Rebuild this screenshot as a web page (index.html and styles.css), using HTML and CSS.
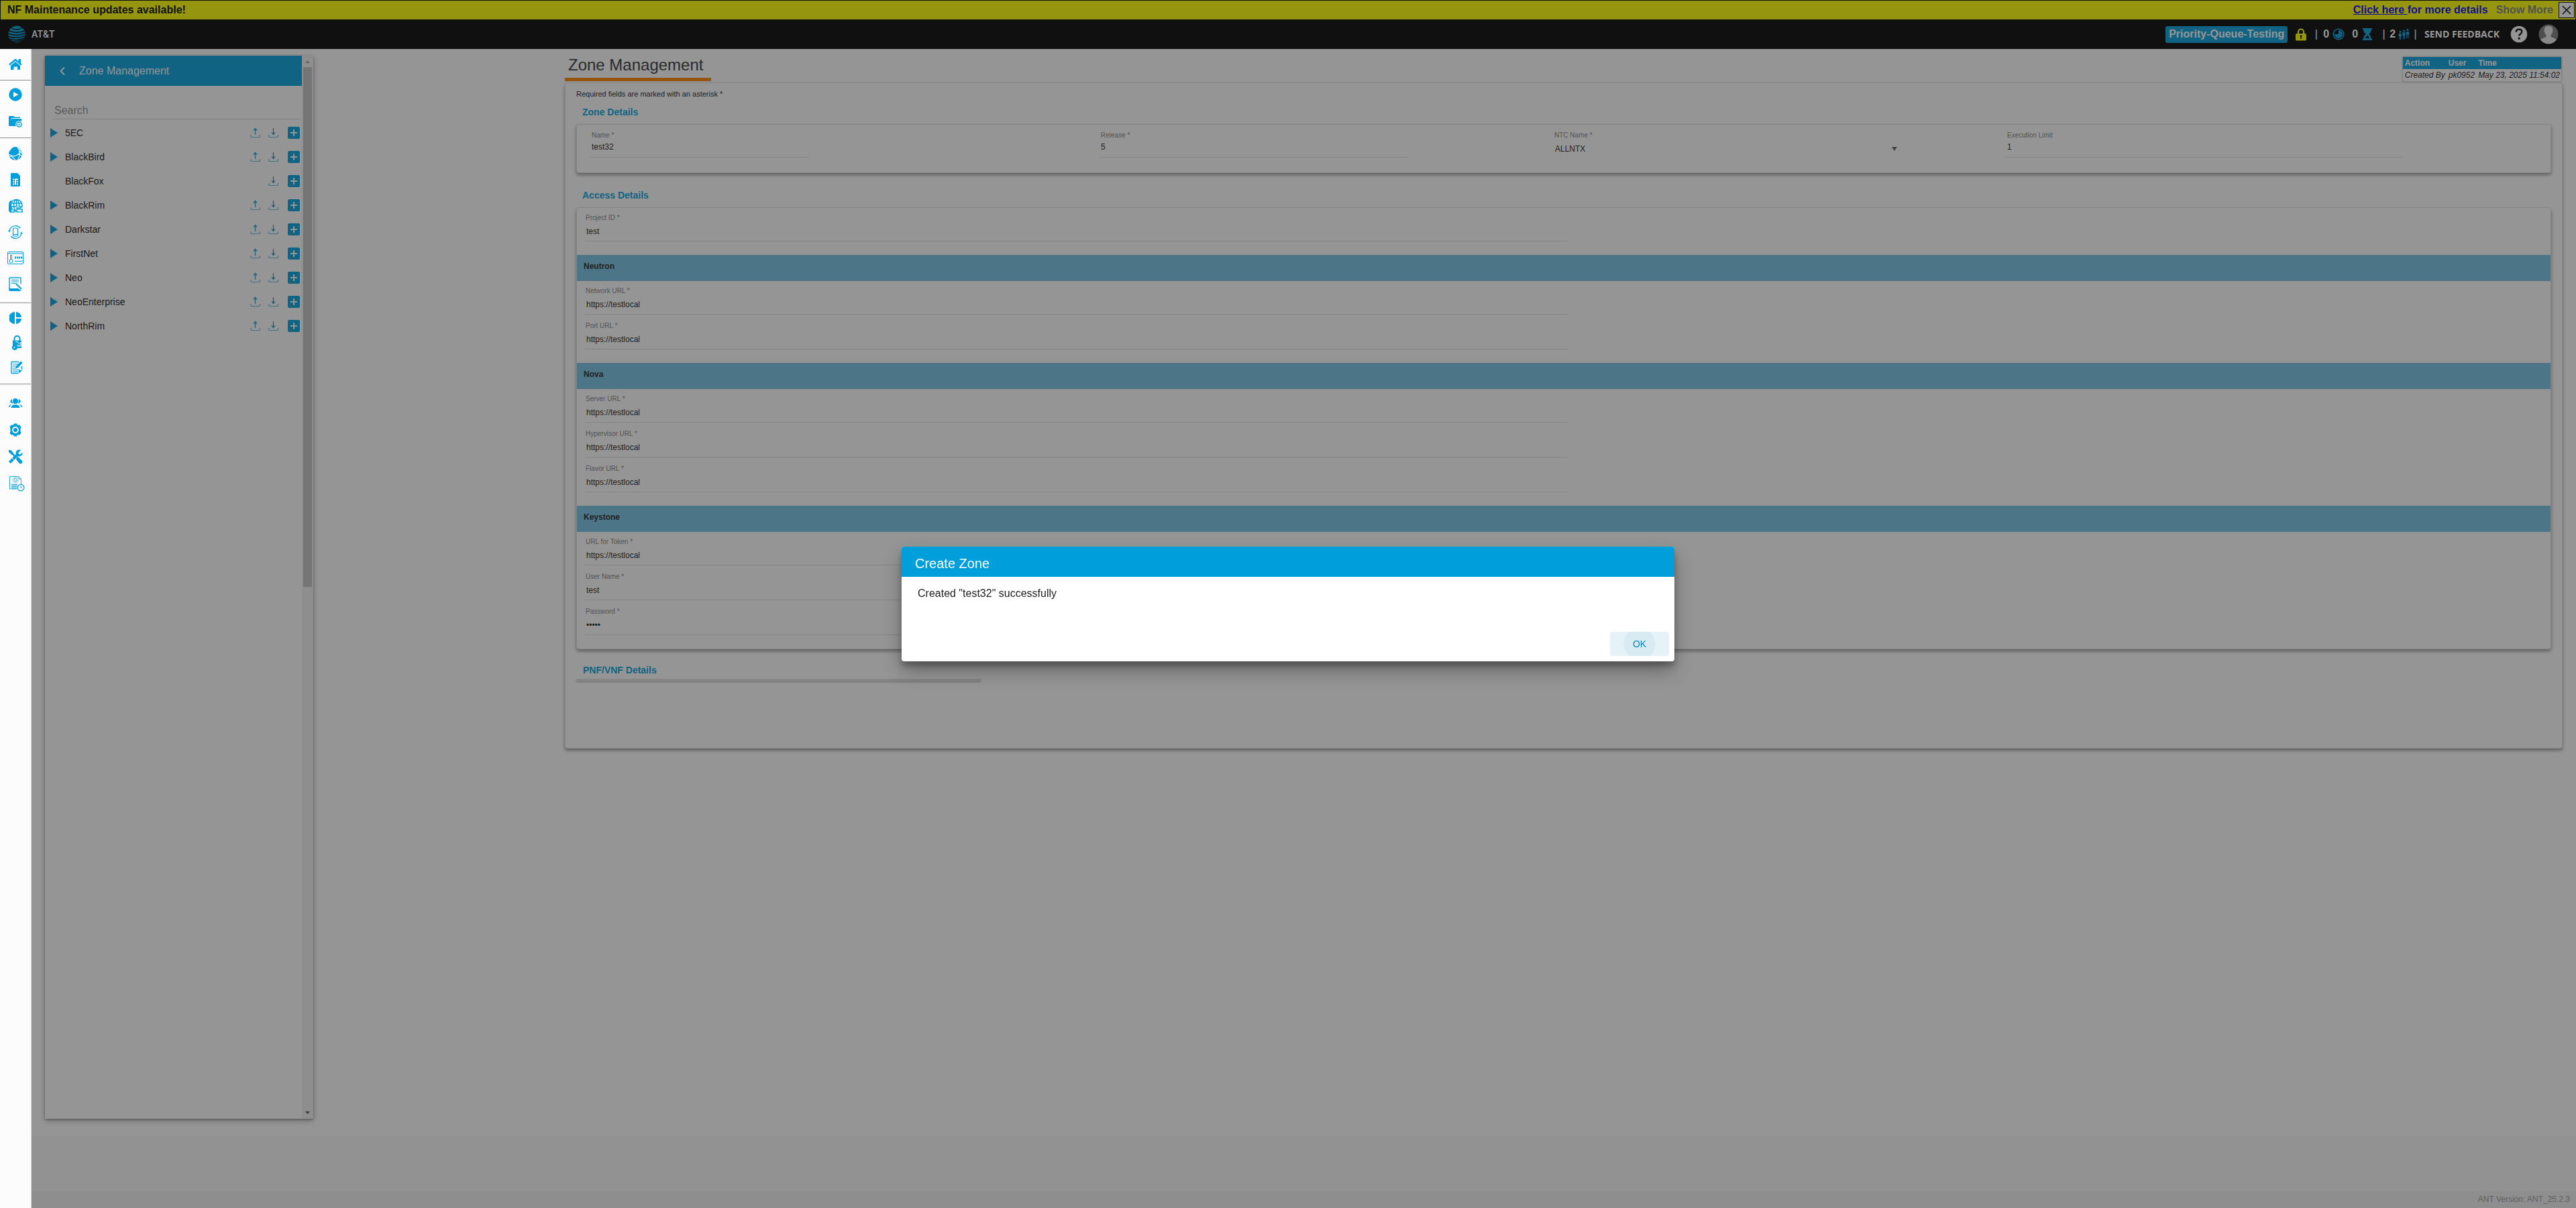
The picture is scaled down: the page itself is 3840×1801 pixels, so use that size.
FILE: index.html
```
<!DOCTYPE html>
<html lang="en">
<head>
<meta charset="utf-8">
<title>Zone Management</title>
<link rel="stylesheet" href="styles.css">
</head>
<body>
<svg class="defs" aria-hidden="true">
  <symbol id="i-up" viewBox="0 0 16 16"><g fill="none" stroke="currentColor"><path d="M1 11v2.500q0 1 1 1h11.500q1 0 1-1V11" opacity=".7" stroke-width="1.200"/><path d="M7.500 11V2M5 4.500 7.500 1.500 10 4.500" stroke-width="1.300"/></g></symbol>
  <symbol id="i-down" viewBox="0 0 16 16"><g fill="none" stroke="currentColor"><path d="M1 11v2.500q0 1 1 1h11.500q1 0 1-1V11" opacity=".7" stroke-width="1.200"/><path d="M7.500 1v9M5 7.500l2.500 3 2.500-3" stroke-width="1.300"/></g></symbol>
  <symbol id="i-plus" viewBox="0 0 18 18"><rect width="18" height="18" rx="2" fill="#009fdb"/><path d="M9 4v10M4 9h10" stroke="#fff" stroke-width="2"/></symbol>
  <symbol id="i-tri" viewBox="0 0 11 14"><path d="M0 0 11 7 0 14z" fill="#009fdb"/></symbol>
</svg>

<div class="banner">
  <strong>NF Maintenance updates available!</strong>
  <span class="banner-right">
    <span class="banner-link"><a href="#">Click here </a>for more details</span>
    <button class="show-more" type="button">Show More</button>
    <button class="banner-close" type="button" aria-label="Close"><svg width="22" height="22" viewBox="0 0 22 22"><path d="M5 5 17 17M17 5 5 17" stroke="#000" stroke-width="1.600"/></svg></button>
  </span>
</div>

<header class="topbar">
  <a class="brand" href="#">
    <svg width="26" height="26" viewBox="0 0 26 26"><defs><clipPath id="ball"><circle cx="13" cy="13" r="12.500"/></clipPath></defs>
      <g clip-path="url(#ball)"><rect width="26" height="26" fill="#009fdb"/><g fill="none" stroke="#000" stroke-width="1.500"><path d="M4 3q9 6 18 0" stroke-width="1.300"/><path d="M0 7.500q13 6 26 0"/><path d="M0 12q13 5 26-.500"/><path d="M0 16q13 5 26-1"/><path d="M2 20q12 4 23-1.500"/><path d="M5 23.300q9 2 17-1.500"/></g></g></svg>
    AT&amp;T
  </a>
  <div class="status">
    <span class="queue">Priority-Queue-Testing</span>
    <svg class="lock" width="16" height="19" viewBox="0 0 16 19"><path d="M4 9V5.500a4 4 0 0 1 8 0V9" fill="none" stroke="#ff0" stroke-width="2.200"/><rect y="8" width="16" height="10.500" rx="1.500" fill="#ff0"/><circle cx="8" cy="11.800" r="1.600" fill="#111"/><path d="M7.200 12h1.600v4H7.200z" fill="#111"/></svg>
    <span class="bar">|</span>
    <span class="count">0 <svg width="18" height="18" viewBox="0 0 18 18"><circle cx="9" cy="9" r="7.800" fill="none" stroke="#009fdb" stroke-width="1.600"/><path d="M9 3a6 6 0 1 1-6 6h6z" fill="#009fdb"/></svg></span>
    <span class="count hour">0 <svg width="14" height="18" viewBox="0 0 14 18"><path d="M0 0h14v2h-1q-.500 5-4 7 3.500 2 4 7h1v2H0v-2h1q.500-5 4-7-3.500-2-4-7H0z" fill="#009fdb"/><path d="M7 10.500 10.500 15h-7z" fill="#000"/></svg></span>
    <span class="bar">|</span>
    <span class="count people">2<svg width="17" height="17" viewBox="0 0 17 17" fill="#009fdb"><circle cx="3" cy="4.500" r="1.600"/><circle cx="8.500" cy="2.800" r="1.600"/><circle cx="14" cy="1.700" r="1.600"/><path d="M.500 7h4.500v4h-1v5H3v-4h-.500v4h-1v-5h-1zM6.200 5.300h4.500v4h-.700v6H9v-5h-1v5H6.900v-6h-.700zM11.800 4.200h4.500v4h-.700v6h-1v-5h-1v5h-1.100v-6h-.700z"/></svg></span>
    <span class="bar">|</span>
    <a class="feedback" href="#">SEND FEEDBACK</a>
    <button class="icon-btn help" type="button" aria-label="Help"><svg width="26" height="26" viewBox="0 0 26 26"><circle cx="13" cy="13" r="12.300" fill="#fff"/><path d="M8.700 9.800q0-4 4.300-4t4.300 3.500c0 3-4 3.200-4 6.200" fill="none" stroke="#111" stroke-width="2.600"/><circle cx="13.200" cy="19.300" r="1.700" fill="#111"/></svg></button>
    <button class="icon-btn" type="button" aria-label="Account"><svg width="30" height="30" viewBox="0 0 30 30"><circle cx="15" cy="15" r="14.500" fill="#797979"/><path d="M3 23q4-2.500 8.500-4V16Q8.500 13 8.500 8.500 9 2.500 15 2.500t6.500 6q0 4.500-3 7.500v3q4.500 1.500 8.500 4a14.500 14.500 0 0 1-24 0z" fill="#e8e8e8"/></svg></button>
  </div>
</header>

<div class="shell">
  <nav class="rail" aria-label="Main">
    <div class="rail-group g1">
      <a href="#" aria-label="Home"><svg width="20" height="20" viewBox="0 0 20 20"><path d="M1 10.500 10 3l9 7.500" fill="none" stroke="#009fdb" stroke-width="2.400"/><path d="M14.500 2H18v6l-3.500-3z" fill="#009fdb"/><path d="M3 11.800 10 6l7 5.800V18h-4v-4.500h-5.500V18H3z" fill="#009fdb"/></svg></a>
    </div>
    <div class="rail-group g2">
      <a href="#" aria-label="Run"><svg width="20" height="20" viewBox="0 0 20 20"><circle cx="10" cy="10" r="9.700" fill="#009fdb"/><path d="M7 6v8l7.500-4z" fill="#fff"/></svg></a>
      <a href="#" aria-label="Runs"><svg width="22" height="20" viewBox="0 0 22 20"><path d="M1 15V3q0-1 1-1h6l2 1.500h8V5H5L2.500 16H1z" fill="#009fdb"/><path d="M5 6H20.500l-2.500 11H1z" fill="#009fdb"/><circle cx="16.500" cy="14.500" r="5.200" fill="#fcfcfc"/><circle cx="16.500" cy="14.500" r="3.500" fill="none" stroke="#009fdb" stroke-width="1.500"/><path d="M15.500 12.800v3.400l2.700-1.700z" fill="#009fdb"/></svg></a>
    </div>
    <div class="rail-group g3">
      <a href="#" aria-label="Network"><svg width="22" height="22" viewBox="0 0 22 22"><circle cx="11" cy="11" r="10" fill="#009fdb"/><g fill="none" stroke="#fcfcfc" stroke-width="1.100"><path d="M1 12q6 4 11 2 6-3 8-8M14 1q7 10 0 20M2 15q6 0 9 6M14 12q4 0 8 3M16 7q3 1 6 5M1 8l5-6M15 3l6 4"/></g><circle cx="9.500" cy="7" r="5" fill="#009fdb"/></svg></a>
      <a href="#" aria-label="SIM"><svg width="16" height="20" viewBox="0 0 16 20"><path d="M1 1q0-1 1-1h9l4 4v15q0 1-1 1H2q-1 0-1-1z" fill="#009fdb"/><path d="M4 8.500h2v2H4zM7 8.500h5v2H9v7H7zM4 12h2v2H4zM10 12h2v2h-2zM4 15.500h2v2H4zM10 15.500h2v2h-2z" fill="#fff"/></svg></a>
      <a href="#" aria-label="Sites"><svg width="22" height="22" viewBox="0 0 22 22"><path d="M6 2a8 8 0 0 0-5 8v8q1 3 4 3V2z" fill="#009fdb"/><circle cx="12.500" cy="10" r="8.500" fill="none" stroke="#009fdb" stroke-width="1.500"/><ellipse cx="12.500" cy="10" rx="4" ry="8.500" fill="none" stroke="#009fdb" stroke-width="1.400"/><path d="M4 7h17M4 12h17M12.500 2v17M3 20h8" stroke="#009fdb" stroke-width="1.600"/><path d="M12 12h9v9h-9z" fill="#fcfcfc"/><path d="M12 14h4v2h-3v4h4M21 13h-3v3h3v4h-3" fill="none" stroke="#009fdb" stroke-width="1.500"/></svg></a>
      <a href="#" aria-label="Device sync"><svg width="22" height="22" viewBox="0 0 22 22"><g fill="none" stroke="#009fdb" stroke-width="1.200"><path d="M2 10A9 9 0 0 1 18 5M20 12A9 9 0 0 1 4 17"/><rect x="7.500" y="5" width="7" height="12" rx="1.500"/><path d="M8 14.500h6"/></g><path d="M0 8.500h4l-2 3zM22 13.500h-4l2-3z" fill="#009fdb"/></svg></a>
      <a href="#" aria-label="Credentials"><svg width="24" height="20" viewBox="0 0 24 20"><g fill="none" stroke="#009fdb"><rect x=".5" y=".5" width="23" height="18" rx="1"/><path d="M0 3h24M11 14.500h11"/><circle cx="5.500" cy="14" r="2.500"/><path d="M4.500 12V5.500h2V12"/></g><path d="M11 9h11" stroke="#009fdb" stroke-width="3" stroke-dasharray="2 1"/></svg></a>
      <a href="#" aria-label="Logs"><svg width="20" height="22" viewBox="0 0 20 22"><path d="M18 10V2q0-1-1-1H2Q1 1 1 2v17q0 1 1 1h15" fill="none" stroke="#009fdb" stroke-width="1.400"/><path d="M1 17.500h13l4 3H2q-1 0-1-1zM4 4.500h11M4 7h11M4 9.500h6" stroke="#009fdb" fill="#009fdb"/><path d="M10.500 9.500 19 18" stroke="#009fdb" stroke-width="2"/></svg></a>
    </div>
    <div class="rail-group g4">
      <a href="#" aria-label="Reports"><svg width="18" height="18" viewBox="0 0 18 18" fill="#009fdb"><path d="M8 0v18A9 9 0 0 1 8 0zM10 0a9 9 0 0 1 8 8h-8zM10 10h8a9 9 0 0 1-8 8z"/></svg></a>
      <a class="nudge" href="#" aria-label="Access keys"><svg width="16" height="22" viewBox="0 0 16 22"><path d="M4.500 9V5a4 4 0 0 1 8 0v4" fill="none" stroke="#009fdb" stroke-width="2"/><rect x="2" y="7.500" width="13" height="9" fill="#009fdb"/><path d="M6 10q3-2 4 1t4-1v5H8" fill="none" stroke="#fff"/><circle cx="5" cy="18" r="4" fill="#009fdb"/><path d="M8 18h7" stroke="#009fdb" stroke-width="2"/><circle cx="4.500" cy="18" r="1" fill="#fff"/></svg></a>
      <a class="nudge" href="#" aria-label="Notes"><svg width="18" height="20" viewBox="0 0 18 20"><path d="M12 1.500H2q-1 0-1 1v15q0 1 1 1h9.500M16.500 8v5" fill="none" stroke="#009fdb" stroke-width="1.400"/><path d="M3 5h8M3 8h5M3 11h4M3 13.500h10M3 16h8" stroke="#009fdb"/><path d="M7 11.500 8 8l7-7.500 2.500 2.500-7 7.500zM12 18.500V14h4.500v1z" fill="#009fdb"/></svg></a>
    </div>
    <div class="rail-group g5">
      <a href="#" aria-label="Users"><svg width="20" height="16" viewBox="0 0 20 16" fill="#009fdb"><circle cx="10" cy="5" r="4"/><path d="M5 2A3.200 3.200 0 0 0 4.500 8.200l2 .3Q4 5 5 2zM15 2a3.200 3.200 0 0 1 .5 6.200l-2 .3Q16 5 15 2zM3.500 15q.5-4.700 6.500-4.700t6.500 4.700zM0 14q0-3.500 4-4.300Q2 11.500 1.500 14zM20 14q0-3.500-4-4.300 2 1.800 2.500 4.300z"/></svg></a>
      <a href="#" aria-label="Settings"><svg width="20" height="20" viewBox="0 0 20 20"><path d="M8 .5h4l1.200 2.300 3-.3 2.300 3.500L17.500 8v4l1 2.500-2.300 3-3-.3L12 19.500H8l-1.200-2.300-3 .3-2.300-3 1-2.500V8l-1-2.500 2.300-3 3 .3z" fill="#009fdb"/><circle cx="10" cy="10" r="4" fill="none" stroke="#fff" stroke-width="1.800"/></svg></a>
      <a href="#" aria-label="Tools"><svg width="22" height="22" viewBox="0 0 22 22"><path d="M3 3 12 12" stroke="#009fdb" stroke-width="2.500"/><path d="M1 1h3l4 4-2.500 3L1 4zM13 12l2-1 6 6q1 2-.5 3.500T17 21l-5-6z" fill="#009fdb"/><path d="M2.500 19.500 16 6" stroke="#009fdb" stroke-width="4"/><circle cx="16.500" cy="5.500" r="5" fill="#009fdb"/><path d="M15 5.500 20 0l3 3-5.500 5z" fill="#fcfcfc"/><path d="M6 13l3 3" stroke="#fcfcfc"/></svg></a>
      <a class="nudge" href="#" aria-label="Scheduled jobs"><svg width="24" height="24" viewBox="0 0 24 24"><g fill="none" stroke="#009fdb" opacity=".85"><path d="M12 20H1.500V1.500H15L18.500 5v8M15 1.500V5h3.500"/><circle cx="10" cy="6.500" r="4" stroke-dasharray="2 1"/><circle cx="10" cy="6.500" r="2"/><path d="M4 13.500h9M4 16h8M4 18.500h8" stroke-width="1.400"/><circle cx="18" cy="18" r="4.800" stroke-width="1.500"/><path d="M18 15v3h2"/></g></svg></a>
    </div>
  </nav>

  <div class="page">
    <div class="content">
      <aside class="panel">
        <div class="panel-body">
          <div class="panel-head">
            <button class="icon-btn" type="button" aria-label="Back"><svg width="10" height="14" viewBox="0 0 10 14"><path d="M8 1.500 2.500 7 8 12.500" fill="none" stroke="#fff" stroke-width="2"/></svg></button>
            <span>Zone Management</span>
          </div>
          <input class="search" type="text" placeholder="Search" aria-label="Search">
          <ul class="tree">
            <li><svg class="tri"><use href="#i-tri"/></svg><span>5EC</span><button type="button" aria-label="Upload"><svg class="io"><use href="#i-up"/></svg></button><button type="button" aria-label="Download"><svg class="io"><use href="#i-down"/></svg></button><button type="button" aria-label="Add"><svg class="plus"><use href="#i-plus"/></svg></button></li>
            <li><svg class="tri"><use href="#i-tri"/></svg><span>BlackBird</span><button type="button" aria-label="Upload"><svg class="io"><use href="#i-up"/></svg></button><button type="button" aria-label="Download"><svg class="io"><use href="#i-down"/></svg></button><button type="button" aria-label="Add"><svg class="plus"><use href="#i-plus"/></svg></button></li>
            <li class="leaf"><span>BlackFox</span><button type="button" aria-label="Download"><svg class="io"><use href="#i-down"/></svg></button><button type="button" aria-label="Add"><svg class="plus"><use href="#i-plus"/></svg></button></li>
            <li><svg class="tri"><use href="#i-tri"/></svg><span>BlackRim</span><button type="button" aria-label="Upload"><svg class="io"><use href="#i-up"/></svg></button><button type="button" aria-label="Download"><svg class="io"><use href="#i-down"/></svg></button><button type="button" aria-label="Add"><svg class="plus"><use href="#i-plus"/></svg></button></li>
            <li><svg class="tri"><use href="#i-tri"/></svg><span>Darkstar</span><button type="button" aria-label="Upload"><svg class="io"><use href="#i-up"/></svg></button><button type="button" aria-label="Download"><svg class="io"><use href="#i-down"/></svg></button><button type="button" aria-label="Add"><svg class="plus"><use href="#i-plus"/></svg></button></li>
            <li><svg class="tri"><use href="#i-tri"/></svg><span>FirstNet</span><button type="button" aria-label="Upload"><svg class="io"><use href="#i-up"/></svg></button><button type="button" aria-label="Download"><svg class="io"><use href="#i-down"/></svg></button><button type="button" aria-label="Add"><svg class="plus"><use href="#i-plus"/></svg></button></li>
            <li><svg class="tri"><use href="#i-tri"/></svg><span>Neo</span><button type="button" aria-label="Upload"><svg class="io"><use href="#i-up"/></svg></button><button type="button" aria-label="Download"><svg class="io"><use href="#i-down"/></svg></button><button type="button" aria-label="Add"><svg class="plus"><use href="#i-plus"/></svg></button></li>
            <li><svg class="tri"><use href="#i-tri"/></svg><span>NeoEnterprise</span><button type="button" aria-label="Upload"><svg class="io"><use href="#i-up"/></svg></button><button type="button" aria-label="Download"><svg class="io"><use href="#i-down"/></svg></button><button type="button" aria-label="Add"><svg class="plus"><use href="#i-plus"/></svg></button></li>
            <li><svg class="tri"><use href="#i-tri"/></svg><span>NorthRim</span><button type="button" aria-label="Upload"><svg class="io"><use href="#i-up"/></svg></button><button type="button" aria-label="Download"><svg class="io"><use href="#i-down"/></svg></button><button type="button" aria-label="Add"><svg class="plus"><use href="#i-plus"/></svg></button></li>
          </ul>
        </div>
        <div class="scrollbar" aria-hidden="true">
          <svg width="17" height="17" viewBox="0 0 17 17"><path d="M5 11h7L8.500 7z" fill="#a3a3a3"/></svg>
          <div class="track"><div class="thumb"></div></div>
          <svg width="17" height="17" viewBox="0 0 17 17"><path d="M5 6h7L8.500 10z" fill="#505050"/></svg>
        </div>
      </aside>

      <main class="main">
        <div class="main-top">
          <h1>Zone Management</h1>
          <table class="audit">
            <thead><tr><th>Action</th><th>User</th><th>Time</th></tr></thead>
            <tbody><tr><td>Created By</td><td>pk0952</td><td>May 23, 2025 11:54:02</td></tr></tbody>
          </table>
        </div>

        <form class="card outer">
          <p class="required">Required fields are marked with an asterisk *</p>

          <h2>Zone Details</h2>
          <div class="card zone-row">
            <div class="field top name"><label for="name">Name *</label><input id="name" type="text" value="test32"></div>
            <div class="field top release"><label for="release">Release *</label><input id="release" type="text" value="5"></div>
            <div class="field top ntc"><label for="ntc">NTC Name *</label>
              <div class="select"><select id="ntc"><option>ALLNTX</option></select><svg width="8" height="6" viewBox="0 0 8 6"><path d="M0 0h8L4 6z" fill="#606060"/></svg></div></div>
            <div class="field top limit"><label for="limit">Execution Limit</label><input id="limit" type="text" value="1"></div>
          </div>

          <h2>Access Details</h2>
          <div class="card">
            <div class="fields">
              <div class="field"><label for="project">Project ID *</label><input id="project" type="text" value="test"></div>
            </div>
            <h3>Neutron</h3>
            <div class="fields">
              <div class="field"><label for="network">Network URL *</label><input id="network" type="text" value="https://testlocal"></div>
              <div class="field"><label for="port">Port URL *</label><input id="port" type="text" value="https://testlocal"></div>
            </div>
            <h3>Nova</h3>
            <div class="fields">
              <div class="field"><label for="server">Server URL *</label><input id="server" type="text" value="https://testlocal"></div>
              <div class="field"><label for="hyper">Hypervisor URL *</label><input id="hyper" type="text" value="https://testlocal"></div>
              <div class="field"><label for="flavor">Flavor URL *</label><input id="flavor" type="text" value="https://testlocal"></div>
            </div>
            <h3>Keystone</h3>
            <div class="fields">
              <div class="field"><label for="token">URL for Token *</label><input id="token" type="text" value="https://testlocal"></div>
              <div class="field"><label for="user">User Name *</label><input id="user" type="text" value="test"></div>
              <div class="field"><label for="pass">Password *</label><input id="pass" type="password" value="token"></div>
            </div>
          </div>

          <h2 class="pnf">PNF/VNF Details</h2>
          <div class="pnf-list"></div>
        </form>
      </main>
    </div>
    <footer class="footer">ANT Version: ANT_25.2.3</footer>
  </div>
</div>

<div class="scrim"></div>
<div class="dialog-layer">
  <section class="dialog" role="dialog" aria-labelledby="dlg-title">
    <h2 id="dlg-title">Create Zone</h2>
    <p>Created "test32" successfully</p>
    <div class="actions"><button type="button">OK</button></div>
  </section>
</div>
</body>
</html>
```
FILE: styles.css
```
* { box-sizing: border-box; }

body {
  margin: 0;
  min-height: 100vh;
  display: flex;
  flex-direction: column;
  background: #fafafa;
  color: #212121;
  font: 14px/20px "Liberation Sans", Arial, sans-serif;
}

h1, h2, h3, p, ul { margin: 0; padding: 0; }
a { color: inherit; text-decoration: none; }
button, input, select { font: inherit; color: inherit; border: 0; padding: 0; margin: 0; background: none; }
svg { display: block; flex: none; }
.defs { position: absolute; width: 0; height: 0; }

/* maintenance banner */
.banner {
  height: 29px;
  padding: 0 1px 0 10px;
  border: 1px solid #000;
  border-bottom: 0;
  background: #ff0;
  display: flex;
  align-items: center;
  justify-content: space-between;
  font-size: 16px;
  font-weight: bold;
  color: #000;
}
.banner-right { display: flex; align-items: center; }
.banner-link { color: #00e; white-space: pre; }
.banner-link a { text-decoration: underline; }
.show-more { margin: 0 8px 0 12px; color: #808080; }
.banner-close { width: 24px; height: 24px; border: 1px solid #000; background: #fff; }

/* top bar */
.topbar {
  height: 44px;
  padding: 0 26px 0 12px;
  background: #000;
  color: #fff;
  display: flex;
  align-items: center;
  justify-content: space-between;
}
.brand { display: flex; align-items: center; gap: 9px; font: 500 14px/20px Roboto, sans-serif; }
.status { display: flex; align-items: center; font-size: 16px; font-weight: bold; }
.queue { height: 25px; padding: 0 5px; border-radius: 3px; background: #009fdb; line-height: 24px; }
.lock { margin: 0 12px 0 12px; }
.bar { width: 5px; font-weight: normal; text-align: center; }
.count { display: flex; align-items: center; gap: 5px; margin: 0 0 0 8px; }
.hour { gap: 7px; margin: 0 15px 0 11px; }
.people { gap: 4px; margin: 0 6px 0 6px; }
.feedback { margin: 0 16px 0 11px; font: bold 14px/20px "Open Sans", sans-serif; }
.help { margin-right: 16px; }
.icon-btn { display: block; }

/* shell */
.shell { flex: 1; display: flex; }
.rail {
  position: relative;
  z-index: 3;
  flex: none;
  width: 47px;
  border-right: 1px solid #dcdcdc;
  background: #fcfcfc;
}
.rail-group { border-bottom: 1px solid #8f8f8f; }
.rail-group a { display: flex; align-items: center; justify-content: center; height: 40px; }
.g1 a { height: 46px; }
.g2 { padding: 1px 0 4px; }
.g3 { padding: 3px 0 8px; }
.g3 a { height: 39px; }
.g4 { padding: 3px 0 6px; }
.g4 a { height: 37px; }
.g5 { padding-top: 8px; border: 0; }
.rail-group .nudge { padding-left: 3px; }

.page { flex: 1; display: flex; flex-direction: column; justify-content: space-between; }
.content {
  min-height: 90vh;
  padding: 10px 20px 0;
  background: #fff;
  display: grid;
  grid-template-columns: minmax(400px, 775fr) 2978fr;
  align-items: start;
}

/* tree panel */
.panel {
  width: 400px;
  height: 88vh;
  display: flex;
  background: #fff;
  box-shadow: 0 1px 3px rgba(0, 0, 0, .3), 0 3px 8px rgba(0, 0, 0, .3);
}
.panel-body { flex: 1; }
.panel-head {
  height: 45px;
  padding: 0 21px;
  display: flex;
  align-items: center;
  gap: 20px;
  background: #009fdb;
  color: #fff;
  font-size: 16px;
}
.search {
  display: block;
  width: calc(100% - 14px);
  height: 26px;
  margin: 24px 2px 2px 12px;
  padding: 0 2px;
  border-bottom: 1px solid #dadada;
  font-size: 16px;
}
.search::placeholder { color: #8f8f8f; opacity: 1; }
.tree { list-style: none; color: #111; }
.tree li { display: flex; align-items: center; height: 36px; padding: 0 3px 0 8px; }
.tree span { flex: 1; }
.tri { width: 11px; height: 14px; margin-right: 11px; }
.tree .leaf { padding-left: 30px; }
.io { width: 16px; height: 16px; margin-right: 11px; color: #1c9cc8; }
.plus { width: 18px; height: 18px; margin-left: 2px; }
.scrollbar { width: 17px; display: flex; flex-direction: column; background: #f1f1f1; }
.track { flex: 1; padding: 0 2px; }
.thumb { height: 50%; background: #c1c1c1; }

/* main column */
.main-top { display: flex; justify-content: space-between; align-items: flex-start; height: 40px; }
h1 {
  height: 38px;
  padding: 0 12px 0 5px;
  border-bottom: 5px solid #ff8300;
  color: #333;
  font-size: 24px;
  font-weight: normal;
  line-height: 28px;
}
.audit {
  border: 2px solid #e0e0e0;
  border-radius: 4px;
  border-collapse: separate;
  border-spacing: 0;
  font-size: 12px;
  line-height: 18px;
  text-align: left;
  white-space: nowrap;
}
.audit th { padding: 0 2px 0 3px; background: #009fdb; color: #fff; }
.audit td { padding: 0 2px 0 3px; font-style: italic; color: #222; }

.card {
  border: 1px solid #e2e2e2;
  border-radius: 4px;
  background: #fff;
  box-shadow: 0 3px 5px rgba(0, 0, 0, .4);
}
.outer { padding: 0 16px 100px; }
.required { padding-top: 6px; font-size: 11px; line-height: 20px; }
.outer h2 { padding-left: 9px; color: #009fdb; font-size: 14px; line-height: 20px; }
.required + h2 { margin: 7px 0 8px; }
.zone-row { display: grid; grid-template-columns: 759fr 676fr 675fr 812fr; padding: 0 0 22px 20px; }
.zone-row + h2 { margin: 23px 0 8px; }

.fields { display: flex; flex-direction: column; gap: 2px; padding: 0 0 20px 12px; width: 50.2%; }
.field { height: 50px; padding-top: 8px; display: flex; flex-direction: column; }
.field label { color: #808080; padding-left: 1px; font-size: 10px; line-height: 14px; }
.field input { flex: 1; width: 100%; padding: 0 2px 2px; border-bottom: 1px solid #e0e0e0; font-size: 12px; }
.top { height: 49px; padding-top: 9px; }
.top label { padding-left: 2px; }
.top input { padding-bottom: 5px; }
.name { width: 43%; }
.release { width: 68%; }
.ntc { width: 76%; }
.limit { width: 73%; }
.select { flex: 1; display: grid; grid-template-columns: 1fr; align-items: center; }
.select select { grid-area: 1 / 1; appearance: none; padding-left: 3px; font-size: 12px; line-height: 24px; }
.select svg { grid-area: 1 / 1; justify-self: end; pointer-events: none; }

h3 {
  height: 39px;
  padding: 8px 10px;
  background: #73c4e5;
  font-size: 12px;
  line-height: 18px;
}
.outer .pnf { margin-top: 21px; padding-left: 10px; }
.pnf-list { width: 603px; height: 3px; margin-top: 3px; background: #e0e0e0; box-shadow: 0 2px 3px rgba(0, 0, 0, .25); }

.footer {
  height: 25px;
  padding-right: 9px;
  background: #f2f2f2;
  color: #999;
  font-size: 12px;
  line-height: 24px;
  text-align: right;
}

/* dialog */
.scrim { position: fixed; inset: 0; z-index: 2; background: rgba(33, 33, 33, .48); }
.dialog-layer { position: fixed; inset: 0; z-index: 4; display: flex; align-items: center; justify-content: center; pointer-events: none; }
.dialog {
  width: 30%;
  border-radius: 4px;
  overflow: hidden;
  background: #fff;
  box-shadow: 0 7px 9px rgba(0, 0, 0, .25), 0 14px 28px rgba(0, 0, 0, .3);
  pointer-events: auto;
}
.dialog h2 {
  height: 45px;
  padding-left: 20px;
  background: #009fdb;
  color: #fff;
  font-size: 20px;
  font-weight: 500;
  line-height: 50px;
}
.dialog p { padding: 15px 24px 0; font-size: 16px; line-height: 20px; }
.actions { display: flex; justify-content: flex-end; padding: 47px 8px 8px; }
.actions button {
  width: 88px;
  height: 36px;
  border-radius: 3px;
  background: radial-gradient(circle at center, #d8ebf3 23px, #e5f3f8 24px);
  color: #0e8ab8;
  font-weight: 500;
}
```
